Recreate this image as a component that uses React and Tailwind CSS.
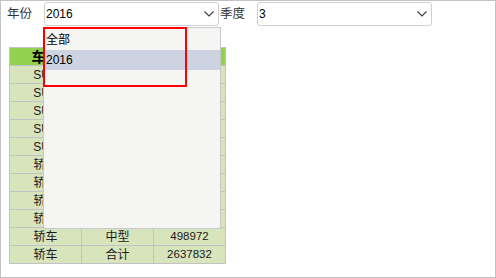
import React from 'react';

const rows = [
    ['SUV', '小型', '183420'],
    ['SUV', '紧凑型', '1102394'],
    ['SUV', '中型', '402231'],
    ['SUV', '中大型', '89412'],
    ['SUV', '合计', '1777457'],
    ['轿车', '微型', '120394'],
    ['轿车', '小型', '482110'],
    ['轿车', '紧凑型', '1320394'],
    ['轿车', '中大型', '215962'],
    ['轿车', '中型', '498972'],
    ['轿车', '合计', '2637832'],
];

const Chevron = () => (
    <svg width="10" height="6" viewBox="0 0 10 6" className="shrink-0">
        <path d="M0.5 0.5 L5 5 L9.5 0.5" fill="none" stroke="#3a3a3a" strokeWidth="1.1" />
    </svg>
);

const Select = ({ value }) => (
    <div className="w-[175px] h-[24px] border border-[#cfcfcf] rounded-[3px] bg-white flex items-center justify-between pl-[1px] pr-[4px]">
        <span className="text-[12px] text-black">{value}</span>
        <Chevron />
    </div>
);

const App = () => {
    return (
        <div
            className="relative w-[496px] h-[278px] border border-[#c3c3c3] bg-white overflow-hidden"
            style={{ fontFamily: '"Liberation Sans", "Noto Sans CJK SC", sans-serif' }}
        >
            <div className="flex items-center pt-[1px] pl-[6px]">
                <span className="w-[37px] text-[12.5px] text-[#333]">年份</span>
                <Select value="2016" />
                <span className="w-[38px] pl-[1px] text-[12.5px] text-[#333]">季度</span>
                <Select value="3" />
            </div>

            <table className="ml-[8px] mt-[21px] border-collapse text-[12px] text-[#1a1a1a]">
                <thead>
                    <tr className="bg-[#92d050] h-[18px]">
                        <th className="w-[72px] border border-[#c3c3c3] p-0 text-[14px] font-bold leading-none text-black">车型</th>
                        <th className="w-[72px] border border-[#c3c3c3] p-0 text-[14px] font-bold leading-none text-black">级别</th>
                        <th className="w-[72px] border border-[#c3c3c3] p-0 text-[14px] font-bold leading-none text-black">销量</th>
                    </tr>
                </thead>
                <tbody>
                    {rows.map((r, i) => (
                        <tr key={i} className="bg-[#d8e4bc] h-[18px]">
                            <td className="border border-[#c3c3c3] p-0 text-center leading-none">{r[0]}</td>
                            <td className="border border-[#c3c3c3] p-0 text-center leading-none">{r[1]}</td>
                            <td className="border border-[#c3c3c3] p-0 text-center leading-none text-[11.5px]">{r[2]}</td>
                        </tr>
                    ))}
                </tbody>
            </table>

            {/* open year list */}
            <div className="absolute left-[42px] top-[26px] w-[178px] h-[202px] bg-[#f5f5f4] border border-[#c8c8c8] pt-[2px]">
                <div className="h-[20px] flex items-center pl-[2px] text-[12px] text-black">全部</div>
                <div className="h-[20px] flex items-center pl-[2px] text-[12px] text-black bg-[#cdd3e0]">2016</div>
            </div>

            {/* highlight box */}
            <div className="absolute left-[42px] top-[26px] w-[144px] h-[60px] border-2 border-[#ff0000]" />
        </div>
    );
};

export default App;
